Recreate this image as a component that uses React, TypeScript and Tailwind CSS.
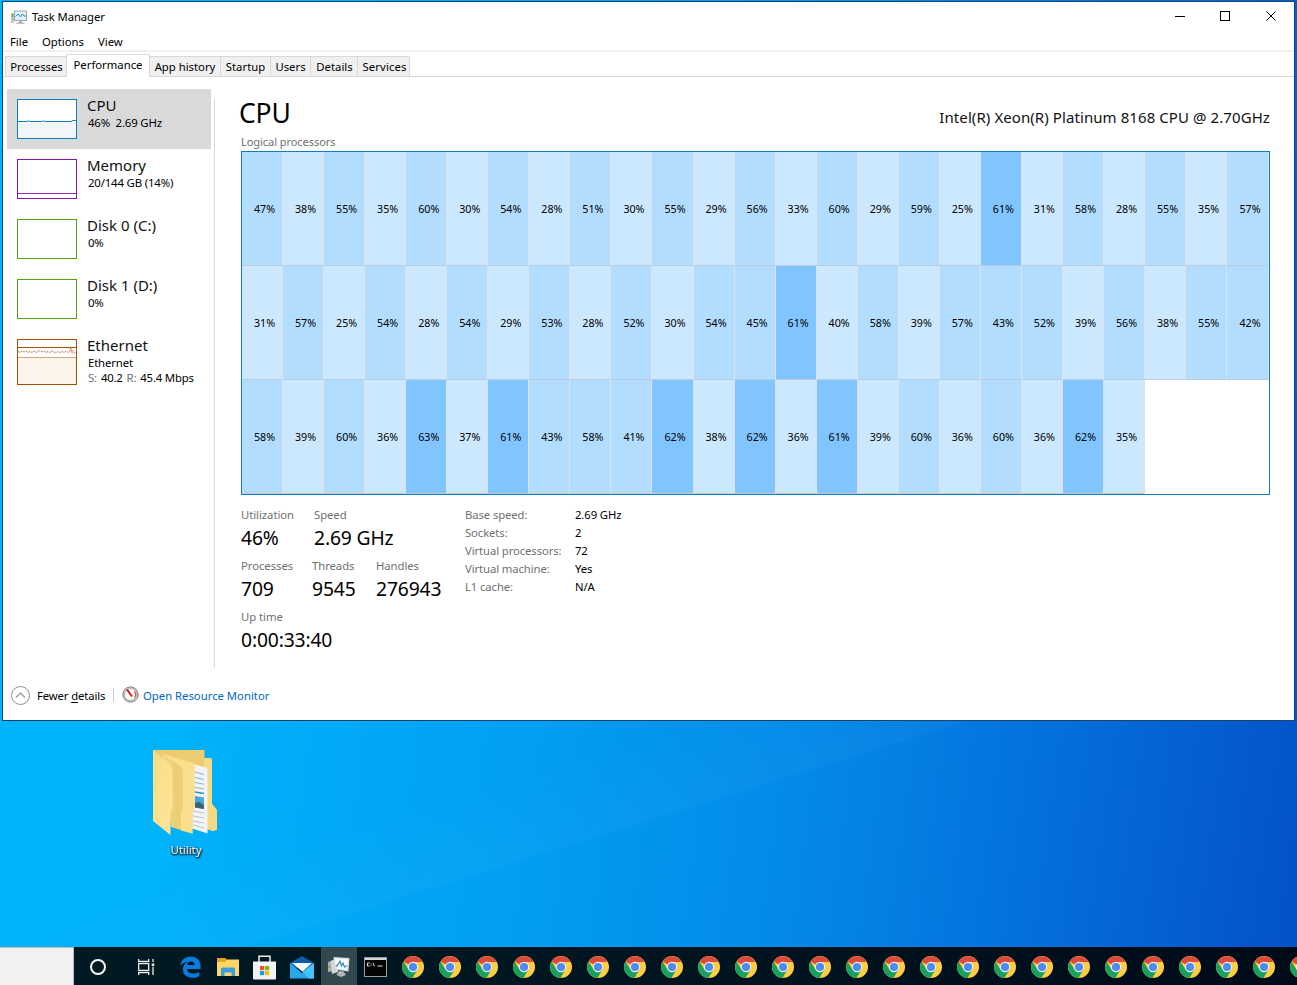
import React from "react";

const ROWS: number[][] = [
  [47, 38, 55, 35, 60, 30, 54, 28, 51, 30, 55, 29, 56, 33, 60, 29, 59, 25, 61, 31, 58, 28, 55, 35, 57],
  [31, 57, 25, 54, 28, 54, 29, 53, 28, 52, 30, 54, 45, 61, 40, 58, 39, 57, 43, 52, 39, 56, 38, 55, 42],
  [58, 39, 60, 36, 63, 37, 61, 43, 58, 41, 62, 38, 62, 36, 61, 39, 60, 36, 60, 36, 62, 35],
];

function heat(v: number) {
  if (v > 60) return "bg-[#80c5ff]";
  if (v > 40) return "bg-[#b3ddff]";
  return "bg-[#cce8ff]";
}

function AppIcon() {
  return (
    <svg width="16" height="16" viewBox="0 0 16 16">
      <rect x="0.5" y="4.5" width="2.2" height="9" fill="#c3c7c9" stroke="#9da2a4" strokeWidth=".5" />
      <rect x="0.8" y="5.5" width="1.6" height="2.5" fill="#43c52c" />
      <rect x="3.5" y="2" width="12" height="9.5" fill="#dff0f9" stroke="#a3a9ab" />
      <path d="M4.500 7.500 L7 5 L9.500 8 L11.500 5 L13 7 H15" fill="none" stroke="#2f8fc4" strokeWidth="1" />
      <path d="M8 12h3v1.500h2.500v1.200h-8v-1.200h2.500z" fill="#a9aeb0" />
    </svg>
  );
}

function Tab({ label, width, last }: { label: string; width: string; last?: boolean }) {
  return (
    <div
      className={`${width} ${last ? "border-r" : ""} h-[21px] border-t border-l border-b border-[#d9d9d9] bg-[#f0f0f0] text-center leading-[19px] whitespace-nowrap`}
    >
      {label}
    </div>
  );
}

function Side({
  title,
  active,
  chart,
  children,
}: {
  title: string;
  active?: boolean;
  chart: React.ReactNode;
  children: React.ReactNode;
}) {
  return (
    <div className={`flex h-[60px] w-[204px] pt-[10px] pl-[10px] ${active ? "bg-[#d9d9d9]" : ""}`}>
      <div className="w-[60px] shrink-0">{chart}</div>
      <div className="-mt-1 ml-[10px] whitespace-nowrap">
        <div className="text-[15px] leading-5 text-[#111]">{title}</div>
        <div className="pl-px text-[11.4px] leading-[15px] tracking-[-0.17px]">{children}</div>
      </div>
    </div>
  );
}

function Stat({ label, value, width }: { label: string; value: string; width?: string }) {
  return (
    <div className={`${width ?? ""} h-[51px] whitespace-nowrap`}>
      <div className="text-[11.3px] leading-4 tracking-[-0.05px] text-[#707070]">{label}</div>
      <div className="mt-px text-[19.3px] leading-7 tracking-[-0.15px]">{value}</div>
    </div>
  );
}

function Chrome() {
  return (
    <svg width="22" height="22" viewBox="0 0 22 22">
      <circle cx="11" cy="11" r="11" fill="#ffcd41" />
      <path d="M11 11 L1.500 5.500 A11 11 0 0 1 20.600 6 H11z" fill="#dc4a3e" />
      <path d="M1.500 5.500 A11 11 0 0 0 10.500 22 L15.500 13.500 L11 11 L6.500 13.500z" fill="#17a05e" />
      <circle cx="11" cy="11" r="5.200" fill="#f2f2f2" />
      <circle cx="11" cy="11" r="4.100" fill="#4b8bf4" />
    </svg>
  );
}

function Edge() {
  return (
    <svg width="21" height="22" viewBox="0 0 21 22">
      <path
        d="M.2 9.600 C1 4 5 .4 10.800 .4 C17 .4 20.600 4.800 20.600 10.200 V13 H7 C7.200 16 9.800 17.600 13.200 17.600 C15.400 17.600 17.500 17 19.300 15.900 V20.200 C17.300 21.300 14.800 21.800 12.200 21.800 C6.300 21.800 2.900 18.300 2.900 13.600 C2.900 10 4.900 7.200 8 5.800 C4.600 6.200 2 7.600 .2 9.600z M7 9 H14.600 C14.600 6.800 13.400 5.400 11 5.400 C8.800 5.400 7.400 6.900 7 9z"
        fill="#0a7bdc"
        fillRule="evenodd"
      />
    </svg>
  );
}

function Explorer() {
  return (
    <svg width="22" height="19" viewBox="0 0 22 19">
      <path d="M0 0h8.500l1.500 2H22v15H0z" fill="#e6a31f" />
      <path d="M0 4h8l2-2.500h12V18H0z" fill="#ffd766" />
      <path d="M4 18V11q0-1.500 1.500-1.500h11q1.500 0 1.500 1.500v7h-3.500v-3.500h-7V18z" fill="#3d9be0" />
    </svg>
  );
}

function Store() {
  return (
    <svg width="23" height="25" viewBox="0 0 23 25">
      <path d="M6 7V1.200h11V7" fill="none" stroke="#eee" strokeWidth="1.500" />
      <path d="M0 6.500h23V23.500q0 1-1 1H1q-1 0-1-1z" fill="#f3f3f3" />
      <rect x="7" y="11" width="4.200" height="4.200" fill="#f25022" />
      <rect x="12" y="11" width="4.200" height="4.200" fill="#7fba00" />
      <rect x="7" y="16" width="4.200" height="4.200" fill="#00a4ef" />
      <rect x="12" y="16" width="4.200" height="4.200" fill="#ffb900" />
    </svg>
  );
}

function Mail() {
  return (
    <svg width="24" height="23" viewBox="0 0 24 23">
      <path d="M0 7 L12 0 L24 7 V12 H0z" fill="#0b5cab" />
      <path d="M0 7 L12 17 L24 7 V22.500H0z" fill="#28a8ea" />
      <path d="M2 7H22L12.500 15.800z" fill="#f4f6f8" />
      <path d="M12.500 15.800 L24 7 V22.500H19z" fill="#41c4f7" />
    </svg>
  );
}

function TaskIcon() {
  return (
    <svg width="24" height="22" viewBox="0 0 24 22">
      <path d="M1 6 L8 4 V15 L1 16z" fill="#a9adae" />
      <path d="M3.500 5 L11 2 V16 L5 18z" fill="#d2d5d6" />
      <rect x="1.500" y="10" width="2" height="2" fill="#6ab04c" />
      <path d="M6.500 1 L22.500 2 L21.500 15.500 L7.500 13.500z" fill="#d8dcde" />
      <path d="M8 2.500 L21 3.400 L20 13.800 L8.800 12.200z" fill="#f7fbfd" />
      <path d="M9 10.500 L11.500 8 L13 5 L14.500 10 L16 7 L17.500 11 L20 9.500" fill="none" stroke="#3389bd" strokeWidth="1.200" />
      <path d="M12 15 L16.500 15.500 L19 19 L14 21 L9.500 19z" fill="#b4b8ba" />
    </svg>
  );
}

function Cmd() {
  return (
    <svg width="23" height="20" viewBox="0 0 23 20">
      <rect x="0.500" y="0.500" width="22" height="19" fill="#050505" stroke="#9a9a9a" />
      <rect x="1" y="1" width="21" height="2" fill="#d5d5d5" />
      <path d="M5.500 6H3.500V9H5.500M7 6.500v.8M7 8.300v.8M9 6l1.500 3.200M13.500 9h5" fill="none" stroke="#e8e8e8" strokeWidth="1" />
    </svg>
  );
}

function TaskView() {
  return (
    <svg width="17" height="16" viewBox="0 0 17 16" fill="none" stroke="#e8eef0" strokeWidth="1.300">
      <path d="M.7 0v2.500h10V0M.7 16v-2.500h10V16M.7 4.700h10v6.600H.7z" />
      <path d="M15 0v3M15 8v8" />
      <rect x="13.700" y="4.500" width="2.600" height="2.600" fill="#e8eef0" stroke="none" />
    </svg>
  );
}

function Folder() {
  return (
    <svg width="66" height="87" viewBox="0 0 66 87">
      <defs>
        <linearGradient id="front" x1="0" y1="0" x2="1" y2="1">
          <stop offset="0" stopColor="#f8dc86" />
          <stop offset="1" stopColor="#ffe599" />
        </linearGradient>
        <linearGradient id="mid" x1="0" y1="0" x2="1" y2="0">
          <stop offset="0" stopColor="#f7da84" />
          <stop offset=".45" stopColor="#eccd76" />
          <stop offset="1" stopColor="#f3d57e" />
        </linearGradient>
      </defs>
      <path d="M0 0H51.500V8H57Q59 8 59 10V54L64 60V79.500L60 81L40 76L0 20z" fill="#edcc6f" />
      <path d="M52 8H57Q59 8 59 10V54L64 60V79.500L60 81L50 77V16z" fill="#f6d980" />
      <path d="M40 14 L54.500 18 V83.500 L38 78z" fill="#f1f3f4" />
      <path d="M42 22l9 2.500M42 27.500l9 2M42 32.500l9 1.700M42 37.500l9 1.500" stroke="#7cb6d8" strokeWidth="1" />
      <path d="M42 42l9 1.500" stroke="#2b8fcf" strokeWidth="1.500" />
      <path d="M42 46l9 1.500V59l-9-1.500z" fill="#4ba3da" />
      <path d="M42 53l4-1 5 3v4l-9-1.500z" fill="#3a6472" />
      <path d="M40 61l11 2M40 66l11 2M40 71l11 2M40 75l11 3" stroke="#bfc4c7" strokeWidth="1" />
      <path d="M9.500 4 L39 12.500 Q41.500 13.500 41.500 16 V57 L39.500 62 V83.500 L18 77z" fill="url(#mid)" />
      <path d="M9.500 4 L39 12.500 Q41.500 13.500 41.500 16 V57 L39.500 62 V83.500 L28 80.500 V62 L30 58 V23 Q30 18 26 15z" fill="#fadf8c" />
      <path d="M0 0 L17 15 Q19.500 18 19.500 22 V57 L17.500 62 V85 L0 71z" fill="url(#front)" />
    </svg>
  );
}

export default function App() {
  return (
    <div className="relative flex h-[985px] w-[1297px] flex-col overflow-hidden bg-[linear-gradient(98deg,#00b4fc_0%,#00b2fa_20%,#029ff2_44%,#038ae9_63%,#046fdb_81%,#0451c7_100%)] font-['Noto_Sans','Open_Sans',sans-serif] text-black">
      <svg className="absolute top-[720px] left-0" width="1297" height="228" viewBox="0 0 1297 228">
        <defs>
          <linearGradient id="ray" gradientUnits="userSpaceOnUse" x1="605" y1="114" x2="580" y2="34">
            <stop offset="0" stopColor="#6fc4ff" stopOpacity=".06" />
            <stop offset="1" stopColor="#6fc4ff" stopOpacity="0" />
          </linearGradient>
        </defs>
        <path d="M970 0 L240 228 H0 V0z" fill="url(#ray)" />
      </svg>

      <div className="relative mt-px ml-[2px] flex h-[720px] w-[1293px] flex-col border border-[#17456f] bg-white text-[11.3px]">
        <div className="flex h-[30px] items-center pl-2">
          <AppIcon />
          <span className="ml-[5px] tracking-[-0.1px]">Task Manager</span>
          <svg className="mr-[17px] mb-[2px] ml-auto" width="102" height="12" viewBox="0 0 102 12" fill="none" stroke="#000" shapeRendering="crispEdges">
            <path d="M0 6.500h10" />
            <rect x="45.500" y="1.500" width="9" height="9" />
            <path d="M91.500 1.500l9 9M100.500 1.500l-9 9" shapeRendering="auto" />
          </svg>
        </div>
        <div className="flex h-[18px] items-center pt-[2px] pl-[7px]">
          <span className="w-8">File</span>
          <span className="w-14">Options</span>
          <span>View</span>
        </div>
        <div className="h-[2px] shrink-0 bg-[#f0f0f0]" />
        <div className="mt-[2px] flex h-[23px] shrink-0 items-end">
          <div className="h-px w-[2px] bg-[#d9d9d9]" />
          <Tab label="Processes" width="w-[62px] -mr-px" />
          <div className="relative h-[23px] w-[84px] border-t border-r border-l border-[#d9d9d9] bg-white text-center leading-5">Performance</div>
          <Tab label="App history" width="w-[70px] border-l-0" />
          <Tab label="Startup" width="w-[50px]" />
          <Tab label="Users" width="w-[40px]" />
          <Tab label="Details" width="w-[47px] pl-px" />
          <Tab label="Services" width="w-[53px] pl-[2px] tracking-[0.1px]" last />
          <div className="h-px flex-1 bg-[#d9d9d9]" />
        </div>

        <div className="flex h-[592px] shrink-0">
          <div className="w-[211px] pt-3 pl-1">
            <Side
              title="CPU"
              active
              chart={
                <svg width="60" height="40">
                  <rect x=".5" y=".5" width="59" height="39" fill="#fff" stroke="#117dbb" />
                  <rect x="1" y="23" width="58" height="16" fill="#f1f6fa" />
                  <path d="M1 22.500H10L11.500 21.800L13 22.500H25L26.500 21.800L28 22.500H54L56 21.500H59" fill="none" stroke="#117dbb" />
                </svg>
              }
            >
              46%&nbsp; 2.69 GHz
            </Side>
            <Side
              title="Memory"
              chart={
                <svg width="60" height="40">
                  <rect x=".5" y=".5" width="59" height="39" fill="#fff" stroke="#8b12ae" />
                  <path d="M1 34.500H59" stroke="#a12bc0" />
                </svg>
              }
            >
              20/144 GB (14%)
            </Side>
            <Side title="Disk 0 (C:)" chart={<div className="h-10 w-[60px] border border-[#4da60c]" />}>
              0%
            </Side>
            <Side title="Disk 1 (D:)" chart={<div className="h-10 w-[60px] border border-[#4da60c]" />}>
              0%
            </Side>
            <Side
              title="Ethernet"
              chart={
                <svg width="60" height="46">
                  <rect x=".5" y=".5" width="59" height="45" fill="#fff" stroke="#a74f01" />
                  <rect x="1" y="18" width="58" height="27" fill="#fcf3eb" />
                  <path d="M1 8.500H59" stroke="#a74f01" />
                  <path d="M1 18.500H59" stroke="#d5a679" />
                  <path d="M1 12.500l2 1 2-1.500 2 1 2-1 2 1.500 2-1 2 1 2-1.500 2 1.500 2-1 2-1 2 1.500 2-1 2 1.500 2-1 2 1 2-1.500 2 1 2 1 2-1.500 2 1 2-1 2 1 2-1.500 2 1.500 2-1 1-5 1 7 1-3 2 3" fill="none" stroke="#dd7440" strokeDasharray="2 1" />
                </svg>
              }
            >
              <div>Ethernet</div>
              <div className="flex gap-1 tracking-[-0.22px]">
                <span className="text-[#707070]">S:</span>
                <span>40.2</span>
                <span className="text-[#707070]">R:</span>
                <span>45.4 Mbps</span>
              </div>
            </Side>
          </div>
          <div className="mt-[22px] h-[569px] w-px bg-[#d9d9d9]" />
          <div className="ml-[26px] w-[1029px] pt-[15px]">
            <div className="flex h-[42px] justify-between whitespace-nowrap">
              <div className="-ml-[2px] text-[26.500px] leading-[42px] tracking-[-0.2px]">CPU</div>
              <div className="pt-[2px] text-[15px] leading-[46px] tracking-[0.08px] text-[#111]">Intel(R) Xeon(R) Platinum 8168 CPU @ 2.70GHz</div>
            </div>
            <div className="h-[17px] text-[11px] leading-4 tracking-[-0.05px] text-[#707070]">Logical processors</div>
            <div className="h-[344px] border border-[#117dbb]">
              {ROWS.map((row, r) => (
                <div key={r} className="grid h-[114px] grid-cols-[repeat(24,41.06px)_1fr]">
                  {row.map((v, c) => (
                    <div
                      key={c}
                      className={`${heat(v)} flex items-center justify-center border-r border-b border-r-[#dbe2e8] border-b-[#b9cbdc] pt-[2px] pl-[5px] text-[10.700px]`}
                    >
                      {v}%
                    </div>
                  ))}
                </div>
              ))}
            </div>
            <div className="flex pt-3">
              <div className="w-[224px]">
                <div className="flex">
                  <Stat label="Utilization" value="46%" width="w-[73px]" />
                  <Stat label="Speed" value="2.69 GHz" />
                </div>
                <div className="flex">
                  <Stat label="Processes" value="709" width="w-[71px]" />
                  <Stat label="Threads" value="9545" width="w-[64px]" />
                  <Stat label="Handles" value="276943" />
                </div>
                <Stat label="Up time" value="0:00:33:40" />
              </div>
              <div className="-mt-px grid grid-cols-[110px_auto] content-start leading-[18px] tracking-[-0.1px]">
                <span className="text-[#707070]">Base speed:</span>
                <span>2.69 GHz</span>
                <span className="text-[#707070]">Sockets:</span>
                <span>2</span>
                <span className="text-[#707070]">Virtual processors:</span>
                <span>72</span>
                <span className="text-[#707070]">Virtual machine:</span>
                <span>Yes</span>
                <span className="text-[#707070]">L1 cache:</span>
                <span>N/A</span>
              </div>
            </div>
          </div>
        </div>

        <div className="flex flex-1 items-start pt-[17px] pl-2 whitespace-nowrap">
          <svg width="19" height="19" viewBox="0 0 19 19" fill="none" stroke="#8e8e8e">
            <circle cx="9.500" cy="9.500" r="9" />
            <path d="M5 11.500l4.500-4.500 4.500 4.500" stroke="#a2a2a2" strokeWidth="1.500" />
          </svg>
          <span className="ml-[7px] w-[76px] leading-[19px] tracking-[-0.12px]">
            Fewer <span className="underline underline-offset-2">d</span>etails
          </span>
          <div className="mt-[2px] h-[14px] w-px bg-[#c8c8c8]" />
          <svg className="ml-2" width="17" height="17" viewBox="0 0 17 17">
            <circle cx="8.500" cy="8.500" r="7.600" fill="#d0d0cd" stroke="#777" strokeWidth="1" />
            <circle cx="8.500" cy="8.500" r="5.800" fill="#fff" stroke="#999" strokeWidth=".6" />
            <path d="M12.500 5.500a5 5 0 0 1 0 6" fill="none" stroke="#d8662f" strokeWidth="1.300" />
            <path d="M5 3.500l5 7" stroke="#d4141c" strokeWidth="2" />
          </svg>
          <span className="ml-1 leading-[19px] text-[#0066cc]">Open Resource Monitor</span>
        </div>
      </div>

      <div className="relative mt-[29px] ml-[153px] flex w-[66px] flex-col items-center">
        <Folder />
        <div className="mt-[5px] text-[11.300px] leading-4 text-white [text-shadow:1px_1px_2px_#000,0_1px_2px_#000]">Utility</div>
      </div>

      <div className="relative mt-auto flex h-[38px] w-[1297px] overflow-hidden bg-[linear-gradient(90deg,#001a23,#001520_50%,#000b1a)]">
        <div className="w-[74px] shrink-0 border-t border-r border-[#bdbdbd] bg-[#f1f1f1]" />
        <div className="flex w-12 shrink-0 items-center justify-center">
          <div className="mt-[2px] h-4 w-4 rounded-full border-2 border-[#f4f6f6]" />
        </div>
        <div className="mr-[2px] flex w-12 shrink-0 items-center justify-center pt-px">
          <TaskView />
        </div>
        {[<Edge key="e" />, <Explorer key="x" />, <Store key="s" />, <Mail key="m" />, <TaskIcon key="t" />, <Cmd key="c" />].map((icon, i) => (
          <div
            key={i}
            className={`flex shrink-0 items-center justify-center pt-[2px] ${i === 4 ? "ml-px w-9 bg-[#32474e]" : "w-[37px]"}`}
          >
            {icon}
          </div>
        ))}
        {Array.from({ length: 25 }, (_, i) => (
          <div key={i} className="flex w-[37px] shrink-0 items-center justify-center pt-[2px]">
            <Chrome />
          </div>
        ))}
      </div>
    </div>
  );
}
